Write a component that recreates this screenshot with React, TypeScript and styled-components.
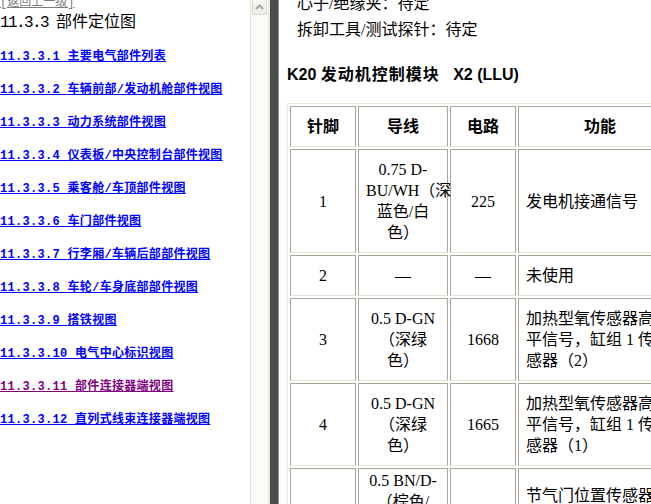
import React from 'react';
import styled, { createGlobalStyle } from 'styled-components';

const GlobalStyle = createGlobalStyle`
    html, body {
        margin: 0;
        padding: 0;
        background: #ffffff;
        overflow: hidden;
    }
`;

const Frameset = styled.div`
    display: flex;
    width: 651px;
    height: 504px;
    overflow: hidden;
    background: #ffffff;
`;

// left frame: table of contents + its scrollbar
const NavFrame = styled.div`
    display: flex;
    flex: 0 0 268px;
    height: 100%;
`;

const NavBody = styled.div`
    flex: 1;
    overflow: hidden;
    font-family: "Liberation Mono", "Noto Sans CJK SC", monospace;
`;

const NavInner = styled.div`
    margin-top: -4px;
    display: flex;
    flex-direction: column;
    align-items: flex-start;
`;

const BackLink = styled.a`
    font-size: 12px;
    line-height: 15px;
    color: #7b7b7b;
    text-decoration: underline;
`;

const NavTitle = styled.div`
    margin-top: 2px;
    font-size: 16px;
    line-height: 20px;
    color: #000;
`;

const NavNum = styled.span`
    letter-spacing: -1.6px;
`;

const LinkList = styled.div`
    display: flex;
    flex-direction: column;
    align-items: flex-start;
    gap: 18px;
    padding-top: 17px;
`;

const TocLink = styled.a<{ $visited?: boolean }>`
    font-size: 12px;
    line-height: 15px;
    font-weight: bold;
    letter-spacing: 0.3px;
    color: ${p => (p.$visited ? '#800080' : '#0000ff')};
    text-decoration: underline;
    white-space: nowrap;
`;

const ScrollTrack = styled.div`
    flex: 0 0 17px;
    background: #fbfbf7;
    border-left: 1px solid #e6e4dc;
    display: flex;
    flex-direction: column;
    align-items: center;
`;

const ScrollButton = styled.div`
    width: 13px;
    height: 14px;
    border: 1px solid #d9d7cd;
    border-top: none;
    border-radius: 0 0 2px 2px;
    background: linear-gradient(#f7f6f1, #ecebe4);
    display: flex;
    align-items: center;
    justify-content: center;
`;

const Divider = styled.div`
    flex: 0 0 8px;
    background: #4b4b4b;
    border-left: 2px solid #ece9d8;
    border-right: 1px solid #8e8e8e;
`;

// right frame: connector page
const DocFrame = styled.div`
    flex: 1;
    overflow: hidden;
    padding-left: 8px;
    font-family: "Liberation Serif", "Noto Sans CJK SC", serif;
    font-size: 16px;
    color: #000;
`;

const DocInner = styled.div`
    margin-top: -9px;
`;

const Note = styled.div`
    padding-left: 10px;
    line-height: 26px;
    white-space: nowrap;
`;

const SectionTitle = styled.div`
    margin: 22px 0 18px 0;
    line-height: 20px;
    font-family: "Liberation Sans", "Noto Sans CJK SC", sans-serif;
    font-weight: bold;
    font-size: 16px;
    white-space: nowrap;
`;

const TitleCjk = styled.span`
    letter-spacing: 1px;
`;

const PinTable = styled.table`
    border: 1px solid;
    border-color: #ece9d8 #aca899 #aca899 #ece9d8;
    border-spacing: 2px;
    table-layout: fixed;
    width: 396px;
`;

const HeadCell = styled.th<{ $w: number }>`
    width: ${p => p.$w}px;
    box-sizing: border-box;
    border: 1px solid;
    border-color: #aca899 #aca899 #e6e3d6 #aca899;
    padding: 9px 7px;
    line-height: 21px;
    font-weight: bold;
    text-align: center;
    vertical-align: middle;
`;

const Cell = styled.td<{ $left?: boolean; $padTop?: number }>`
    box-sizing: border-box;
    border: 1px solid;
    border-color: #aca899 #aca899 #e6e3d6 #aca899;
    padding: 9px 7px;
    padding-top: ${p => (p.$padTop ?? 9)}px;
    line-height: 21px;
    text-align: ${p => (p.$left ? 'left' : 'center')};
    vertical-align: middle;
    white-space: nowrap;
`;

const links = [
    { num: '11.3.3.1', label: '主要电气部件列表' },
    { num: '11.3.3.2', label: '车辆前部/发动机舱部件视图' },
    { num: '11.3.3.3', label: '动力系统部件视图' },
    { num: '11.3.3.4', label: '仪表板/中央控制台部件视图' },
    { num: '11.3.3.5', label: '乘客舱/车顶部件视图' },
    { num: '11.3.3.6', label: '车门部件视图' },
    { num: '11.3.3.7', label: '行李厢/车辆后部部件视图' },
    { num: '11.3.3.8', label: '车轮/车身底部部件视图' },
    { num: '11.3.3.9', label: '搭铁视图' },
    { num: '11.3.3.10', label: '电气中心标识视图' },
    { num: '11.3.3.11', label: '部件连接器端视图', visited: true },
    { num: '11.3.3.12', label: '直列式线束连接器端视图' },
];

const columns = [
    { title: '针脚', w: 66 },
    { title: '导线', w: 90 },
    { title: '电路', w: 66 },
    { title: '功能', w: 164 },
];

const rows = [
    { pin: '1', wire: ['0.75 D-', 'BU/WH（深', '蓝色/白', '色）'], circuit: '225', fn: ['发电机接通信号'] },
    { pin: '2', wire: ['—'], circuit: '—', fn: ['未使用'] },
    { pin: '3', wire: ['0.5 D-GN', '（深绿', '色）'], circuit: '1668', fn: ['加热型氧传感器高电', '平信号，缸组 1 传', '感器（2）'] },
    { pin: '4', wire: ['0.5 D-GN', '（深绿', '色）'], circuit: '1665', fn: ['加热型氧传感器高电', '平信号，缸组 1 传', '感器（1）'] },
    { pin: '5', wire: ['0.5 BN/D-', '（棕色/', '深绿', '色）'], circuit: '485', fn: ['节气门位置传感器', '信号 1（主）', '—'], padTop: 1 },
];

function Lines({ items }: { items: string[] }) {
    return (
        <>
            {items.map((t, i) => (
                <React.Fragment key={i}>
                    {i > 0 && <br />}
                    {t}
                </React.Fragment>
            ))}
        </>
    );
}

function App() {
    return (
        <Frameset>
            <GlobalStyle />
            <NavFrame>
                <NavBody>
                    <NavInner>
                        <BackLink>[返回上一级]</BackLink>
                        <NavTitle>
                            <NavNum>11.3.3 </NavNum>部件定位图
                        </NavTitle>
                        <LinkList>
                            {links.map(l => (
                                <TocLink key={l.num} $visited={l.visited}>
                                    {l.num} {l.label}
                                </TocLink>
                            ))}
                        </LinkList>
                    </NavInner>
                </NavBody>
                <ScrollTrack>
                    <ScrollButton>
                        <svg width="9" height="6" viewBox="0 0 9 6">
                            <path d="M1 5 L4.5 1.5 L8 5" fill="none" stroke="#a9a9a4" strokeWidth="2" />
                        </svg>
                    </ScrollButton>
                </ScrollTrack>
            </NavFrame>
            <Divider />
            <DocFrame>
                <DocInner>
                    <Note>心子/绝缘夹：待定</Note>
                    <Note>拆卸工具/测试探针：待定</Note>
                    <SectionTitle>
                        K20 <TitleCjk>发动机控制模块</TitleCjk>{'\u00a0\u00a0\u00a0'}X2 (LLU)
                    </SectionTitle>
                    <PinTable>
                        <thead>
                            <tr>
                                {columns.map(c => (
                                    <HeadCell key={c.title} $w={c.w}>{c.title}</HeadCell>
                                ))}
                            </tr>
                        </thead>
                        <tbody>
                            {rows.map(r => (
                                <tr key={r.pin}>
                                    <Cell>{r.pin}</Cell>
                                    <Cell $padTop={r.padTop}><Lines items={r.wire} /></Cell>
                                    <Cell>{r.circuit}</Cell>
                                    <Cell $left><Lines items={r.fn} /></Cell>
                                </tr>
                            ))}
                        </tbody>
                    </PinTable>
                </DocInner>
            </DocFrame>
        </Frameset>
    );
}

export default App;
